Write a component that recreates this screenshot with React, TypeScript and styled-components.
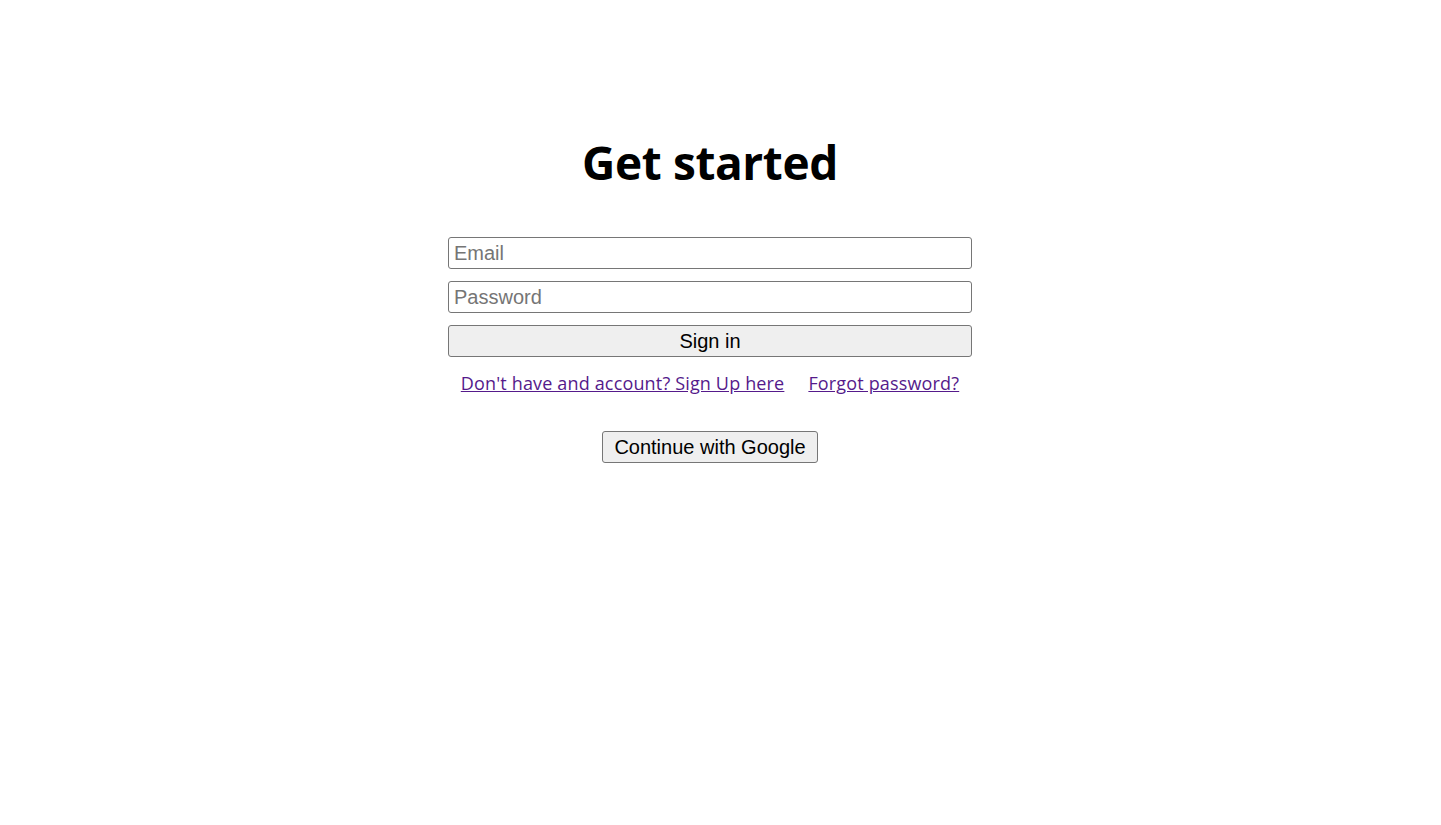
import React from "react";
import styled, { createGlobalStyle } from "styled-components";

const Global = createGlobalStyle`
  html, body { margin: 0; padding: 0; background: #fff; }
  body { font-family: "Open Sans", "Noto Sans", sans-serif; }
`;

const Page = styled.main`
  width: 1420px;
  display: flex;
  flex-direction: column;
  align-items: center;
  padding-top: 132px;
`;

const Title = styled.h1`
  margin: 0 0 45px;
  font-family: "Open Sans", sans-serif;
  font-weight: 700;
  font-size: 46px;
  line-height: 60px;
  color: #000;
  letter-spacing: -0.4px;
`;

const Form = styled.form`
  width: 524px;
  display: flex;
  flex-direction: column;
  gap: 12px;
`;

const Input = styled.input`
  box-sizing: border-box;
  height: 32px;
  width: 100%;
  border: 1px solid #767676;
  border-radius: 3px;
  padding: 0 5px;
  font-family: "Liberation Sans", Arial, sans-serif;
  font-size: 20px;
  color: #000;
  &::placeholder { color: #757575; }
`;

const Button = styled.button<{ $full?: boolean }>`
  box-sizing: border-box;
  height: 32px;
  width: ${(p) => (p.$full ? "100%" : "auto")};
  padding: 0 11px;
  border: 1px solid #767676;
  border-radius: 3px;
  background: #efefef;
  font-family: "Liberation Sans", Arial, sans-serif;
  font-size: 20px;
  color: #000;
`;

const Links = styled.div`
  display: flex;
  justify-content: center;
  gap: 24px;
  margin-top: -1px;
`;

const Link = styled.a`
  font-family: "Open Sans", sans-serif;
  font-size: 18px;
  line-height: 30px;
  letter-spacing: 0.16px;
  color: #551a8b;
  text-decoration: underline;
`;

const GoogleRow = styled.div`
  margin-top: 33px;
  display: flex;
  justify-content: center;
`;

export default function App() {
  return (
    <>
      <Global />
      <Page>
        <Title>Get started</Title>
        <Form onSubmit={(e) => e.preventDefault()}>
          <Input type="email" placeholder="Email" />
          <Input type="password" placeholder="Password" />
          <Button $full type="submit">Sign in</Button>
          <Links>
            <Link href="#signup">Don't have and account? Sign Up here</Link>
            <Link href="#forgot">Forgot password?</Link>
          </Links>
        </Form>
        <GoogleRow>
          <Button type="button">Continue with Google</Button>
        </GoogleRow>
      </Page>
    </>
  );
}
